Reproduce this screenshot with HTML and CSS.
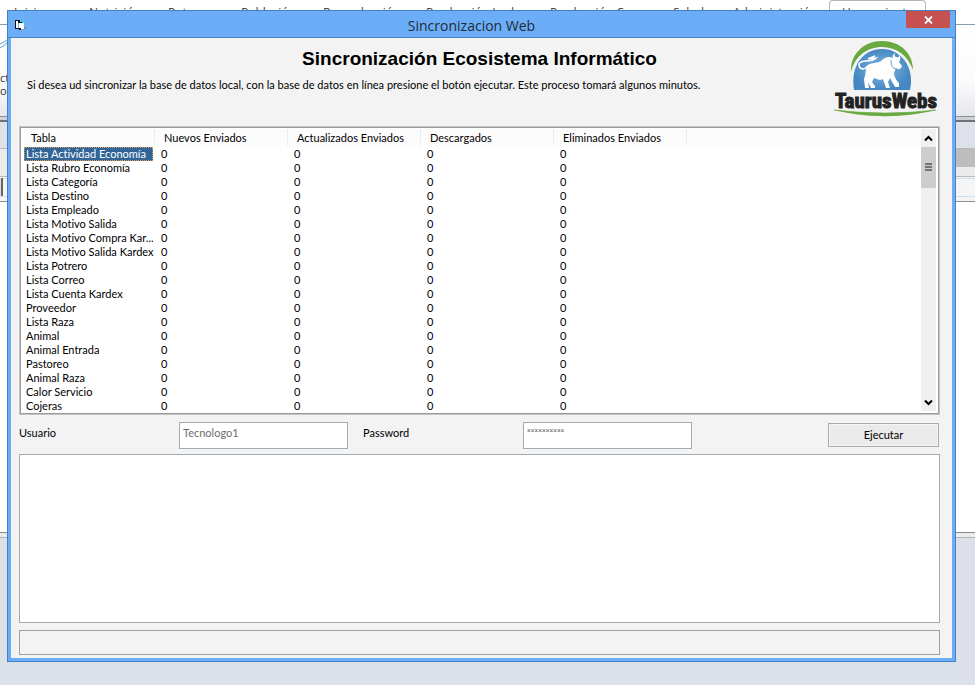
FILE: index.html
```html
<!DOCTYPE html>
<html lang="es">
<head>
<meta charset="utf-8">
<title>Sincronizacion Web</title>
<link rel="stylesheet" href="styles.css">
</head>
<body>
<div class="app">
  <nav class="menu">
    <a href="#">Inicio</a><a href="#">Nutrición</a><a href="#">Potreros</a><a href="#">Población</a><a href="#">Reproducción</a><a href="#">Producción Leche</a><a href="#">Producción Carne</a><a href="#">Salud</a><a href="#">Administración</a><a href="#" class="current">Herramientas</a>
  </nav>
  <div class="ribbon">
    <svg class="swoosh" width="8" height="12" viewBox="0 0 8 12"><path d="M0 7Q4 5 8 3M0 11Q4 9 8 5" fill="none" stroke="#5b9bd0"/></svg>
    <span>ct</span><span>oc</span>
  </div>
  <div class="divider"></div>
  <div class="band"></div>
  <div class="tabs"></div>
  <div class="fields"><span class="handle"></span></div>
  <div class="sheet"></div>
  <div class="sheet-foot"></div>
</div>

<main class="window">
  <header class="titlebar">
    <svg class="form-icon" width="12" height="11" viewBox="0 0 12 11"><path d="M0 0H4V2H2V8H5V9H0Z" fill="#111"/><path d="M1 1H3V8H1Z" fill="#fff"/><path d="M5 1H9V3H7V2H5Z" fill="#20dce8"/><path d="M3 0H5V2H7V3H5V3H3ZM4 8H6V10H4Z" fill="#111"/><path d="M4 3H9V9H6V8H4Z" fill="#fff"/><path d="M9 7H10V8H12V9H9Z" fill="#888"/></svg>
    <h1>Sincronizacion Web</h1>
    <button class="close" aria-label="Cerrar"><svg width="9" height="8" viewBox="0 0 9 8"><path d="M1 .5L8 7.500M8 .5L1 7.500" stroke="#fff" stroke-width="1.800"/></svg></button>
  </header>
  <div class="client">
    <section class="intro">
      <div class="copy">
        <h2>Sincronización Ecosistema Informático</h2>
        <p>Si desea ud sincronizar la base de datos local, con la base de datos en línea presione el botón ejecutar. Este proceso tomará algunos minutos.</p>
      </div>
      <svg class="logo" width="106" height="78" viewBox="0 0 106 78" role="img" aria-label="TaurusWebs">
        <defs><radialGradient id="sky"><stop offset="0" stop-color="#86b8df"/><stop offset="1" stop-color="#4487c2"/></radialGradient></defs>
        <path d="M17 33C16 15 30 2 48 2S79 14 79 31C74 17 63 8 48 8S21 17 17 33Z" fill="#69a93f"/>
        <path d="M20 51C16 27 29 10 48 10S81 28 76 51Z" fill="url(#sky)"/>
        <path d="M33 27C36 23 42 25 47 22C51 18 55 17 59 19C58 17 59 15 61 14C60 17 61 18 63 18C65 19 66 17 64 15C67 17 67 20 65 23L68 27C66 31 65 31 62 29L60 34C60 38 63 42 65 44V48H61L56 39L54 43L56 49H52L49 40C46 42 43 40 40 39L38 43L41 47V49H37L34 43L35 49H31L30 40C32 36 31 31 33 27Z" fill="#fff"/>
        <path d="M34 27C29 32 25 30 25 25C28 19 36 25 42 19L34 20L41 17" fill="none" stroke="#fff" stroke-width="1.600"/>
        <path d="M57 21C57 28 59 29 62 30" fill="none" stroke="#5e9ad0" stroke-width="1"/>
        <text x="52" y="69" text-anchor="middle" class="brand">TaurusWebs</text>
        <path d="M0 71Q51 77 102 71Q76 77 51 77T0 71Z" fill="#69a93f" stroke="#69a93f" stroke-width=".6"/>
      </svg>
    </section>

    <div class="list">
      <table>
        <colgroup><col class="c-name"><col class="c-num"><col class="c-num"><col class="c-num"><col class="c-num"><col></colgroup>
        <thead><tr><th>Tabla</th><th>Nuevos Enviados</th><th>Actualizados Enviados</th><th>Descargados</th><th>Eliminados Enviados</th><th></th></tr></thead>
        <tbody>
          <tr class="selected"><td><span>Lista Actividad Economía</span></td><td>0</td><td>0</td><td>0</td><td>0</td><td></td></tr>
          <tr><td>Lista Rubro Economía</td><td>0</td><td>0</td><td>0</td><td>0</td><td></td></tr>
          <tr><td>Lista Categoría</td><td>0</td><td>0</td><td>0</td><td>0</td><td></td></tr>
          <tr><td>Lista Destino</td><td>0</td><td>0</td><td>0</td><td>0</td><td></td></tr>
          <tr><td>Lista Empleado</td><td>0</td><td>0</td><td>0</td><td>0</td><td></td></tr>
          <tr><td>Lista Motivo Salida</td><td>0</td><td>0</td><td>0</td><td>0</td><td></td></tr>
          <tr><td>Lista Motivo Compra Kar...</td><td>0</td><td>0</td><td>0</td><td>0</td><td></td></tr>
          <tr><td>Lista Motivo Salida Kardex</td><td>0</td><td>0</td><td>0</td><td>0</td><td></td></tr>
          <tr><td>Lista Potrero</td><td>0</td><td>0</td><td>0</td><td>0</td><td></td></tr>
          <tr><td>Lista Correo</td><td>0</td><td>0</td><td>0</td><td>0</td><td></td></tr>
          <tr><td>Lista Cuenta Kardex</td><td>0</td><td>0</td><td>0</td><td>0</td><td></td></tr>
          <tr><td>Proveedor</td><td>0</td><td>0</td><td>0</td><td>0</td><td></td></tr>
          <tr><td>Lista Raza</td><td>0</td><td>0</td><td>0</td><td>0</td><td></td></tr>
          <tr><td>Animal</td><td>0</td><td>0</td><td>0</td><td>0</td><td></td></tr>
          <tr><td>Animal Entrada</td><td>0</td><td>0</td><td>0</td><td>0</td><td></td></tr>
          <tr><td>Pastoreo</td><td>0</td><td>0</td><td>0</td><td>0</td><td></td></tr>
          <tr><td>Animal Raza</td><td>0</td><td>0</td><td>0</td><td>0</td><td></td></tr>
          <tr><td>Calor Servicio</td><td>0</td><td>0</td><td>0</td><td>0</td><td></td></tr>
          <tr><td>Cojeras</td><td>0</td><td>0</td><td>0</td><td>0</td><td></td></tr>
        </tbody>
      </table>
      <div class="scroll">
        <button aria-label="Subir"><svg width="9" height="7" viewBox="0 0 9 7"><path d="M1 5.500L4.500 2L8 5.500" fill="none" stroke="#000" stroke-width="2"/></svg></button>
        <div class="thumb"><svg width="7" height="9" viewBox="0 0 7 9"><path d="M0 1H7M0 4H7M0 7H7" stroke="#555" stroke-width="1.500"/></svg></div>
        <button class="down" aria-label="Bajar"><svg width="9" height="7" viewBox="0 0 9 7"><path d="M1 1.500L4.500 5L8 1.500" fill="none" stroke="#000" stroke-width="2"/></svg></button>
      </div>
    </div>

    <form class="login">
      <label for="user">Usuario</label>
      <input id="user" type="text" value="Tecnologo1" disabled>
      <label for="pass">Password</label>
      <input id="pass" class="masked" type="text" value="××××××××××" disabled>
      <button type="button" class="run">Ejecutar</button>
    </form>
    <textarea class="log" aria-label="Registro" readonly></textarea>
    <div class="progress"></div>
  </div>
</main>
</body>
</html>
```

FILE: styles.css
```css
* { box-sizing: border-box; }
body {
  margin: 0;
  height: 100vh;
  overflow: hidden;
  position: relative;
  background: #dce1e9;
  font: 11px/14px Lato, "Liberation Sans", sans-serif;
  font-variant-ligatures: none;
  color: #000;
}
button { padding: 0; font: inherit; color: inherit; }

/* Parent application behind the dialog */
.app { display: flex; flex-direction: column; height: 100%; }
.menu {
  display: grid;
  grid-template-columns: 75px 79px 73px 82px 103px 124px 123px 60px 96px 97px;
  padding-left: 14px;
  height: 24px;
  background: #fff;
  font: 12px/16px "Open Sans", sans-serif;
}
.menu a { padding-top: 5px; color: #444; text-decoration: none; white-space: nowrap; }
.menu .current { border: 1px solid #b4b6ba; border-bottom: 0; border-radius: 4px 4px 0 0; padding: 4px 12px; }
.ribbon {
  height: 93px;
  border-top: 1px solid #8a9aa8;
  border-bottom: 1px solid #8a8f98;
  background: linear-gradient(#fff, #fbfbfc 60%, #e6e8ec);
  font: 11px/13px "Open Sans", sans-serif;
  color: #333;
}
.ribbon span { display: block; }
.swoosh { display: block; margin: 12px 0 22px; }
.divider { height: 5px; background: #cfd1d6; border-bottom: 2px solid #707276; }
.band { height: 27px; background: #dce1ea; border-bottom: 1px solid #b8b8b8; }
.tabs { height: 28px; background: linear-gradient(#bdbdbd 0 18px, #ebebeb 18px) right / 50% 100% no-repeat #ebebeb; border-bottom: 1px solid #b8b8b8; }
.fields { height: 25px; padding-top: 1px; background: linear-gradient(#f5f5f5 1px, #cfdfec 1px 2px, #f5f5f5 2px 19px, #cfdfec 19px 20px, #f5f5f5 20px); border-bottom: 1px solid #8d8f94; }
.handle { display: block; width: 3px; height: 18px; border-right: 2px solid #666; background: #ddd; }
.sheet { flex: 1; background: #fff; }
.sheet-foot { height: 153px; border-top: 1px solid #85888e; background: linear-gradient(#ececec 4px, #b3b3b3 4px 5px, #dce1e9 5px); }

/* Dialog */
.window {
  position: absolute;
  inset: 10px 19px 23px 7px;
  display: flex;
  flex-direction: column;
  padding: 0 3px 3px;
  border: 1px solid #4480c2;
  background: #6badf7;
}
.titlebar { display: grid; grid-template-columns: 44px 1fr 44px; height: 27px; margin: 0 -3px; padding: 0 5px; border-bottom: 1px solid #4480c2; }
.form-icon { margin: 9px 2px; }
.titlebar h1 { margin: 0; text-align: center; font: 14px/30px "Open Sans", sans-serif; color: #222b35; padding-right: 20px; }
.close { height: 17px; border: 0; background: #c75050; }
.client { flex: 1; display: flex; flex-direction: column; padding: 0 12px 3px 8px; background: #f3f3f3; }
.intro { display: flex; height: 88px; }
.copy { flex: 1; }
.copy h2 { margin: 0; padding: 10px 0 0 106px; text-align: center; font: bold 19px/22px "Liberation Sans", sans-serif; }
.copy p { margin: 8px 0 0 8px; white-space: nowrap; }
.logo { margin: 1px 0 0; }
.brand { font: bold 21px "Liberation Sans Narrow", "Roboto Condensed", sans-serif; fill: #222; stroke: #222; stroke-width: 1px; }

.list { display: flex; padding: 1px 2px 0 1px; border: 2px solid #9a9a9a; outline: 1px solid #c4c4c4; outline-offset: -1px; background: #fff; height: 289px; }
table { flex: 1; table-layout: fixed; border-collapse: collapse; margin-left: 2px; width: 0; height: 284px; }
.c-name { width: 131px; }
.c-num { width: 133px; }
th { height: 18px; padding: 0 0 1px 9px; text-align: left; font-weight: normal; background: linear-gradient(#dbe9f6, #eef5fb) right / 1px 100% no-repeat #fcfcfc; white-space: nowrap; }
th:first-child { padding-left: 7px; }
th:last-child { background: #fcfcfc; }
td { height: 14px; padding: 0 0 0 6px; line-height: 14px; white-space: nowrap; }
td:first-child { padding-left: 2px; }
.selected td:first-child { padding: 0 2px 0 0; }
.selected span { display: block; height: 14px; line-height: 12px; padding-left: 1px; border: 1px dotted #e69a50; background: #316598; color: #fff; }
.scroll { display: flex; flex-direction: column; width: 15px; margin-bottom: 2px; background: #f0f0f0; }
.scroll button { height: 18px; border: 0; background: none; }
.scroll .down { margin-top: auto; }
.thumb { display: grid; place-items: center; height: 41px; background: #cdcdcd; }

.login { display: grid; grid-template-columns: 160px 169px 175px 169px 1fr 111px; height: 39px; align-items: start; padding: 7px 1px 0 0; }
.login label { padding-top: 4px; }
.login label[for="pass"] { padding-left: 15px; }
.login input { width: 100%; height: 27px; padding: 0 3px 7px; border: 1px solid #a3abb2; background: #fff; color: #6d6d6d; font: 11px/14px Lato, sans-serif; }
.login .masked { font-family: Roboto, sans-serif; font-size: 7px; padding-bottom: 10px; }
.run { grid-column: 6; height: 24px; margin-top: 1px; border: 1px solid #a8abae; background: #eaeaea; box-shadow: inset 0 0 0 1px #f6f6f6; }
.log { flex: 1; display: block; width: 100%; resize: none; border: 1px solid #a3abb2; background: #fff; outline: 0; }
.progress { height: 25px; margin-top: 7px; border: 1px solid #a0a0a0; }
```
